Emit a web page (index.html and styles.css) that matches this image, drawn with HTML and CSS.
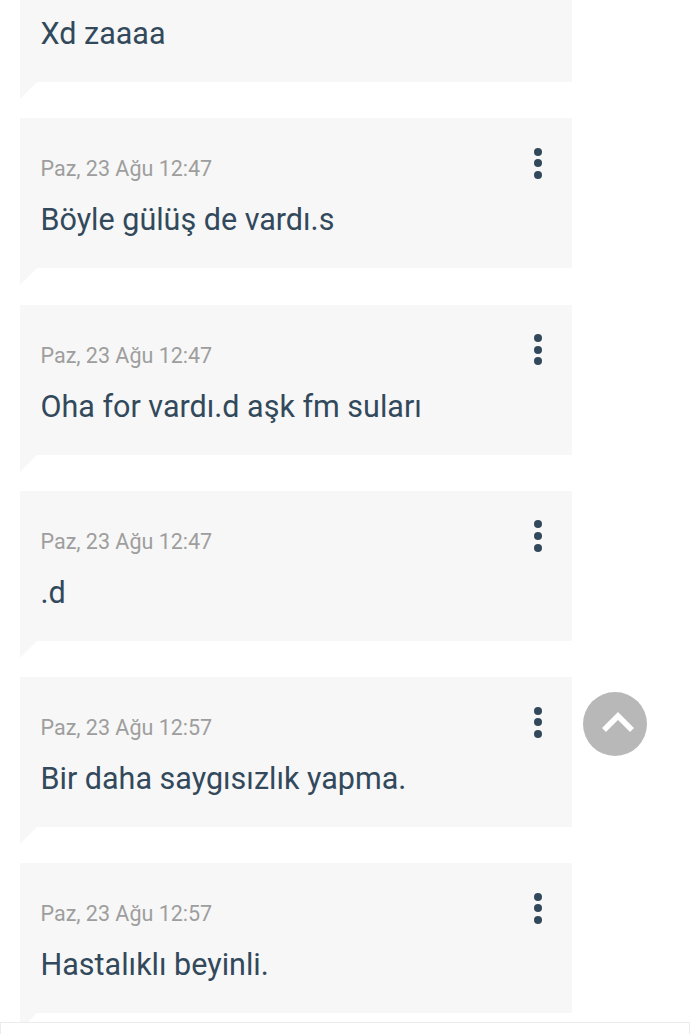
FILE: index.html
```html
<!DOCTYPE html>
<html lang="tr">
<head>
    <meta charset="UTF-8">
    <meta name="viewport" content="width=device-width, initial-scale=1.0">
    <title>Mesajlar</title>
    <link rel="stylesheet" href="styles.css">
</head>
<body>
    <div class="message-list">
        <div class="message message-first">
            <div class="message-text">Xd zaaaa</div>
        </div>
        <div class="message">
            <div class="message-date">Paz, 23 Ağu 12:47</div>
            <div class="message-text">Böyle gülüş de vardı.s</div>
            <div class="message-menu"><span></span><span></span><span></span></div>
        </div>
        <div class="message">
            <div class="message-date">Paz, 23 Ağu 12:47</div>
            <div class="message-text">Oha for vardı.d aşk fm suları</div>
            <div class="message-menu"><span></span><span></span><span></span></div>
        </div>
        <div class="message">
            <div class="message-date">Paz, 23 Ağu 12:47</div>
            <div class="message-text">.d</div>
            <div class="message-menu"><span></span><span></span><span></span></div>
        </div>
        <div class="message">
            <div class="message-date">Paz, 23 Ağu 12:57</div>
            <div class="message-text">Bir daha saygısızlık yapma.</div>
            <div class="message-menu"><span></span><span></span><span></span></div>
        </div>
        <div class="message">
            <div class="message-date">Paz, 23 Ağu 12:57</div>
            <div class="message-text">Hastalıklı beyinli.</div>
            <div class="message-menu"><span></span><span></span><span></span></div>
        </div>
    </div>

    <div class="scroll-top">
        <svg width="32" height="22" viewBox="0 0 32 22">
            <path d="M2 19 L16 5 L30 19" fill="none" stroke="#fff" stroke-width="5.5"/>
        </svg>
    </div>
    <div class="bottom-bar"></div>
</body>
</html>
```

FILE: styles.css
```css
/* Mesajlar */
html, body {
    height: 100%;
}
body {
    font-family: Roboto, "Noto Sans", sans-serif;
    background-color: white;
    margin: 0;
    padding: 0;
    overflow: hidden;
}
.message-list {
    display: flex;
    flex-direction: column;
    gap: 36.25px;
    width: 552px;
    margin-left: 20px;
}
.message {
    position: relative;
    box-sizing: border-box;
    height: 150px;
    padding: 38px 20px 0 20.5px;
    background-color: #f7f7f7;
}
/* first bubble is scrolled past the top, only its text shows */
.message-first {
    height: 82px;
    padding-top: 16px;
}
.message-first .message-text {
    margin-top: 0;
}
/* the little tail under each bubble */
.message::after {
    content: "";
    position: absolute;
    left: 0;
    top: 100%;
    border-top: 17px solid #f7f7f7;
    border-right: 17px solid transparent;
}
.message-date {
    font-size: 21.5px;
    line-height: 26px;
    color: #9e9e9e;
}
.message-text {
    margin-top: 20px;
    font-size: 30.5px;
    line-height: 36px;
    color: #32495c;
}
.message-menu {
    position: absolute;
    top: 29.5px;
    right: 30px;
    display: flex;
    flex-direction: column;
    gap: 3.7px;
}
.message-menu span {
    width: 8px;
    height: 8px;
    border-radius: 50%;
    background-color: #32495c;
}
.scroll-top {
    position: fixed;
    left: 583px;
    top: 692px;
    width: 64px;
    height: 64px;
    border-radius: 50%;
    background-color: #b8b8b8;
    display: flex;
    justify-content: center;
    align-items: center;
}
.scroll-top svg {
    margin-top: -4px;
    margin-left: 6px;
}
.bottom-bar {
    position: fixed;
    left: 0;
    right: 0;
    top: 1022px;
    bottom: 0;
    background-color: white;
    border: 1px solid #ececec;
    border-bottom: none;
}
```
